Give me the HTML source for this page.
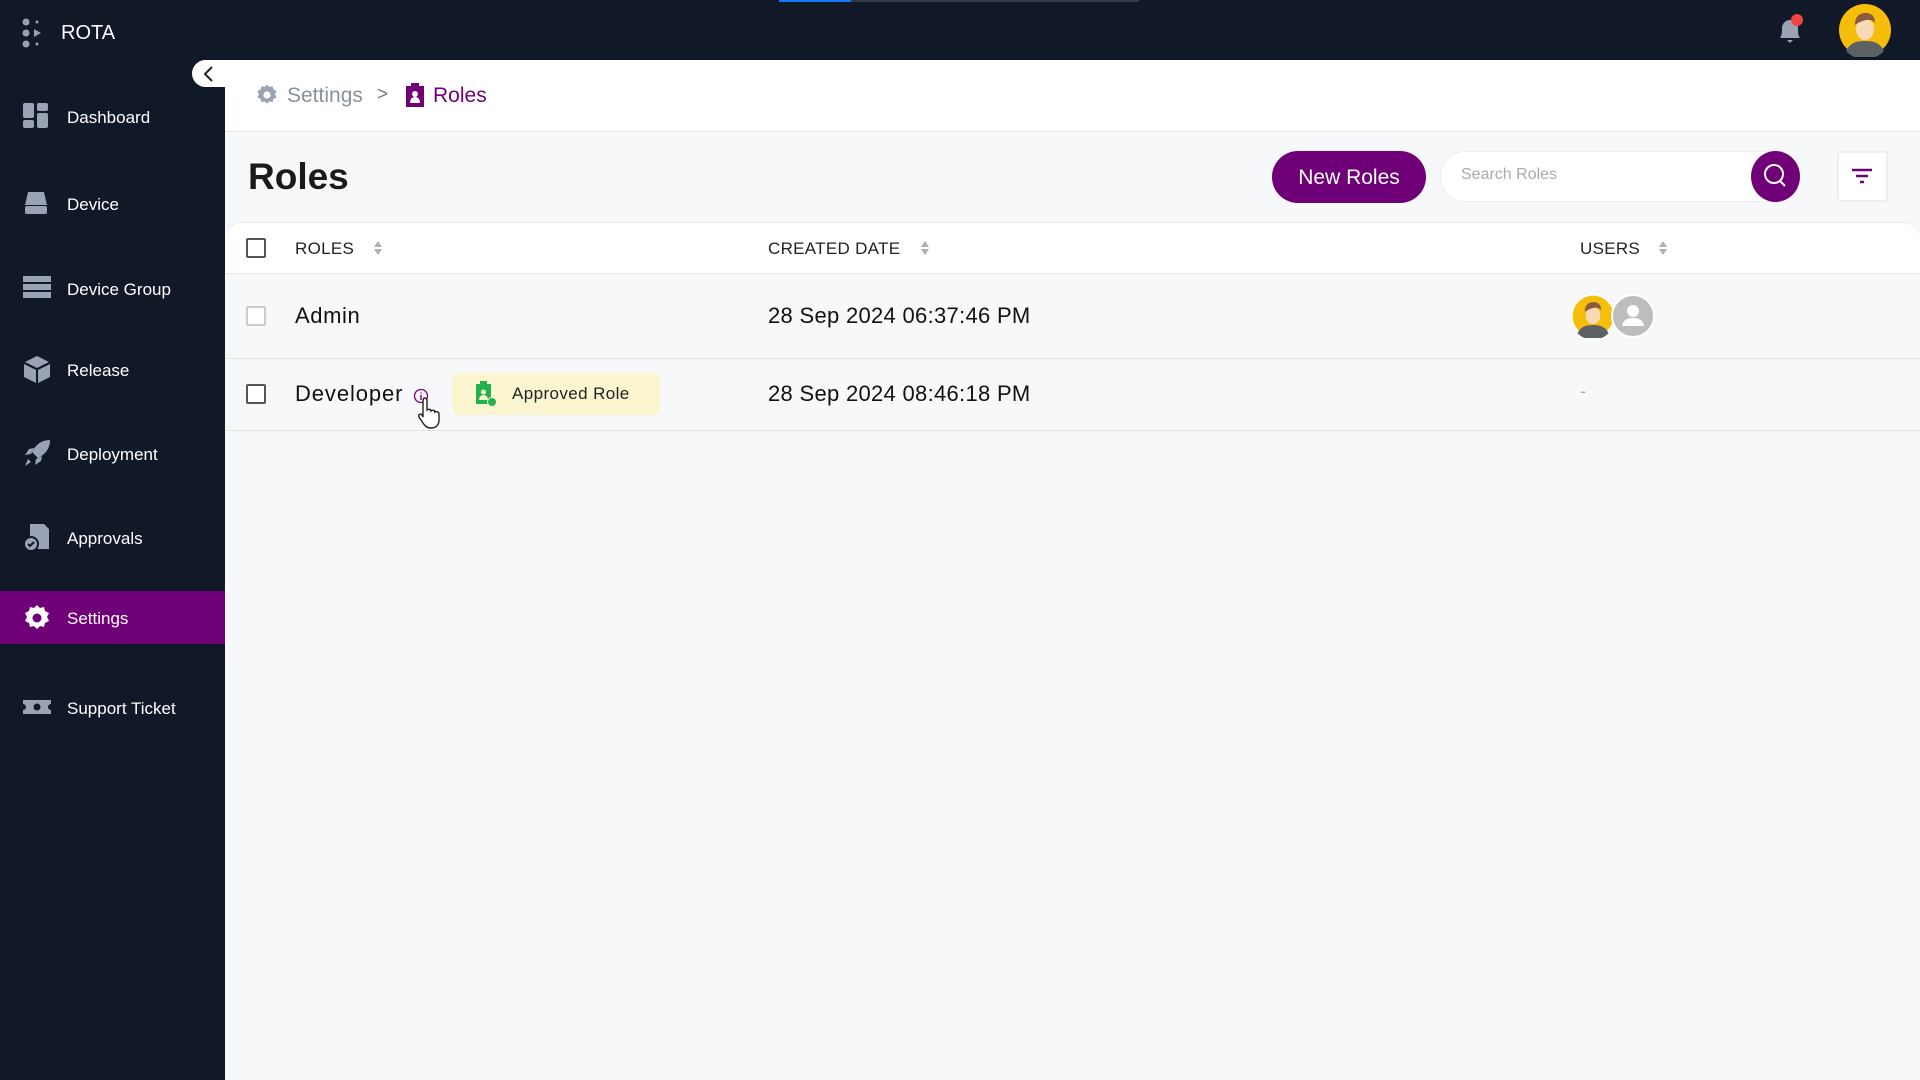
<!DOCTYPE html>
<html><head><meta charset="utf-8"><style>
*{box-sizing:border-box;margin:0;padding:0}
body{width:1920px;height:1080px;overflow:hidden;font-family:"Liberation Sans",sans-serif;background:#f7f8f9;position:relative}
.top{position:absolute;left:0;top:0;width:1920px;height:60px;background:#111827}
.side{position:absolute;left:0;top:60px;width:225px;height:1020px;background:#111827}
.abs{position:absolute}
.nav{position:absolute;left:0;width:225px;height:52px;display:flex;align-items:center;color:#fff;font-size:17px}
.nav svg{position:absolute;left:22px}
.nav span{position:absolute;left:67px;top:18px}
.cb{position:absolute;width:20px;height:20px;border:2px solid #555;border-radius:2px;background:#fff}
.hd{position:absolute;font-size:17px;color:#222;top:239px;letter-spacing:0.3px}
.sort{position:absolute;top:240px;width:10px;height:16px}
.rt{position:absolute;font-size:22px;color:#111}
</style></head><body>
<div class="top"></div>
<div class="abs" style="left:779px;top:0;width:72px;height:2px;background:#1677ff"></div>
<div class="abs" style="left:851px;top:0;width:288px;height:2px;background:#333a45"></div>
<svg class="abs" style="left:20px;top:18px" width="24" height="32" viewBox="0 0 24 32"><g fill="#9aa0ac"><circle cx="6" cy="4" r="3.5"/><circle cx="6" cy="15" r="3.5"/><circle cx="6" cy="26" r="3.5"/><circle cx="17" cy="4" r="1.5"/><circle cx="17" cy="26" r="1.5"/><path d="M14 11l7 4-7 4z"/></g></svg>
<div class="abs" style="left:61px;top:22px;color:#fff;font-size:20px">ROTA</div>
<svg class="abs" style="left:1772px;top:12px" width="36" height="36" viewBox="0 0 36 36"><path d="M8 26c2-3 2-6 2-10a8 8 0 0116 0c0 4 0 7 2 10z" fill="#9aa3b5"/><path d="M15 28h6l-3 3z" fill="#9aa3b5"/><circle cx="25" cy="8" r="6" fill="#f2453d"/></svg>
<svg class="abs" style="left:1838px;top:3px" width="54" height="54" viewBox="0 0 54 54"><circle cx="27" cy="27" r="26" fill="#f5be0b"/><path d="M8 48c4-8 10-10 19-10s15 2 19 10a26 26 0 01-38 0z" fill="#5d6166"/><ellipse cx="27" cy="26" rx="9" ry="11" fill="#f7d9b8"/><path d="M17 22c0-9 5-12 11-12s9 4 9 10c-3-4-10-5-20 2z" fill="#8a5a3c"/></svg>
<div class="side"></div>
<div class="abs" style="left:192px;top:60px;width:40px;height:27px;background:#fff;border-radius:14px 0 0 14px"></div>
<svg class="abs" style="left:202px;top:64px" width="14" height="20" viewBox="0 0 14 20"><path d="M10 3L3 10l7 7" stroke="#222" stroke-width="2" fill="none"/></svg>
<div class="nav" style="top:90px"><svg width="28" height="28" viewBox="0 0 28 28" fill="#9aa3b5"><rect x="1" y="1" width="11" height="15" rx="2"/><rect x="15" y="1" width="11" height="8" rx="2"/><rect x="1" y="18" width="11" height="8" rx="2"/><rect x="15" y="11" width="11" height="15" rx="2"/></svg><span>Dashboard</span></div>
<div class="nav" style="top:177px"><svg width="28" height="28" viewBox="0 0 28 28" fill="#9aa3b5"><path d="M6 3h16l3 13H3z"/><rect x="3" y="17" width="22" height="8" rx="2"/></svg><span>Device</span></div>
<div class="nav" style="top:262px"><svg width="30" height="28" viewBox="0 0 30 28" fill="#9aa3b5"><rect x="1" y="2" width="28" height="6"/><rect x="1" y="10" width="28" height="6"/><rect x="1" y="18" width="28" height="6"/></svg><span>Device Group</span></div>
<div class="nav" style="top:343px"><svg width="30" height="30" viewBox="0 0 30 30" fill="#9aa3b5"><path d="M15 2l12 6-12 6-12-6z"/><path d="M2 10l12 6v13L2 23z"/><path d="M28 10l-12 6v13l12-6z"/></svg><span>Release</span></div>
<div class="nav" style="top:427px"><svg width="30" height="30" viewBox="0 0 30 30" fill="#9aa3b5"><path d="M28 2c-8 0-14 4-18 12l6 6c8-4 12-10 12-18z"/><path d="M9 16l-6 1 4-6 5-1zM14 21l-1 6 6-4 1-5z"/><path d="M6 21l3 3-6 4z"/></svg><span>Deployment</span></div>
<div class="nav" style="top:511px"><svg width="30" height="30" viewBox="0 0 30 30" fill="#9aa3b5"><path d="M8 2h14l5 5v20H8z"/><circle cx="9" cy="22" r="7" fill="#9aa3b5" stroke="#111827" stroke-width="2"/><path d="M6 22l2 2 4-4" stroke="#111827" stroke-width="2" fill="none"/></svg><span>Approvals</span></div>
<div class="nav" style="top:591px;height:53px;background:#6f0077"><svg width="30" height="30" viewBox="0 0 30 30"><path d="M15 2l3 3 4-1 1 4 4 2-2 4 2 4-4 2-1 4-4-1-3 3-3-3-4 1-1-4-4-2 2-4-2-4 4-2 1-4 4 1z" fill="#fff"/><circle cx="15" cy="15" r="4.5" fill="#6f0077"/></svg><span>Settings</span></div>
<div class="nav" style="top:681px"><svg width="30" height="28" viewBox="0 0 30 28" fill="#9aa3b5"><path d="M1 7h28v4a3 3 0 000 6v4H1v-4a3 3 0 000-6z"/><circle cx="15" cy="14" r="3.5" fill="#111827"/></svg><span>Support Ticket</span></div>
<div class="abs" style="left:225px;top:60px;width:1695px;height:72px;background:#fff;border-bottom:1px solid #e6e6e6"></div>
<svg class="abs" style="left:255px;top:83px" width="24" height="24" viewBox="0 0 30 30"><path d="M15 2l3 3 4-1 1 4 4 2-2 4 2 4-4 2-1 4-4-1-3 3-3-3-4 1-1-4-4-2 2-4-2-4 4-2 1-4 4 1z" fill="#9aa3b5"/><circle cx="15" cy="15" r="4.5" fill="#fff"/></svg>
<div class="abs" style="left:287px;top:84px;font-size:21px;color:#8a8f98">Settings</div>
<div class="abs" style="left:377px;top:84px;font-size:19px;color:#777">&gt;</div>
<svg class="abs" style="left:405px;top:82px" width="20" height="26" viewBox="0 0 20 26"><rect x="1" y="4" width="18" height="21" fill="#6f0077"/><rect x="6" y="1" width="8" height="5" fill="#6f0077"/><circle cx="10" cy="12" r="3" fill="#fff"/><path d="M5 21c0-4 2-6 5-6s5 2 5 6z" fill="#fff"/></svg>
<div class="abs" style="left:433px;top:84px;font-size:21px;color:#6f0077">Roles</div>
<div class="abs" style="left:248px;top:156px;font-size:37px;font-weight:bold;color:#1a1a1a">Roles</div>
<div class="abs" style="left:1272px;top:151px;width:154px;height:52px;border-radius:26px;background:#6f0077;color:#fff;font-size:21px;text-align:center;line-height:54px">New Roles</div>
<div class="abs" style="left:1440px;top:151px;width:360px;height:51px;border-radius:26px;background:#fff;border:1px solid #eee"></div>
<div class="abs" style="left:1461px;top:166px;font-size:16px;color:#aaa">Search Roles</div>
<div class="abs" style="left:1751px;top:151px;width:49px;height:51px;border-radius:50%;background:#6f0077"></div>
<svg class="abs" style="left:1762px;top:162px" width="28" height="28" viewBox="0 0 28 28"><circle cx="12" cy="12" r="9" stroke="#fff" stroke-width="2" fill="none"/><path d="M18 19l5 5" stroke="#fff" stroke-width="2"/></svg>
<div class="abs" style="left:1837px;top:151px;width:51px;height:51px;background:#fff;border:2px solid #eee;border-radius:3px"></div>
<svg class="abs" style="left:1850px;top:168px" width="24" height="18" viewBox="0 0 24 18"><path d="M2 2h20M6 8h12M10 14h4" stroke="#6f0077" stroke-width="2.5"/></svg>
<div class="abs" style="left:226px;top:222px;width:1694px;height:52px;background:#fff;border-radius:16px 16px 0 0;border-top:1px solid #eaeaea;border-bottom:1px solid #e6e6e6"></div>
<div class="cb" style="left:246px;top:238px"></div>
<div class="hd" style="left:295px">ROLES</div>
<div class="hd" style="left:768px">CREATED DATE</div>
<div class="hd" style="left:1580px">USERS</div>
<svg class="sort" style="left:373px" viewBox="0 0 10 16"><path d="M5 1l4 6H1zM5 15l4-6H1z" fill="#b0b0b0"/></svg>
<svg class="sort" style="left:920px" viewBox="0 0 10 16"><path d="M5 1l4 6H1zM5 15l4-6H1z" fill="#b0b0b0"/></svg>
<svg class="sort" style="left:1658px" viewBox="0 0 10 16"><path d="M5 1l4 6H1zM5 15l4-6H1z" fill="#b0b0b0"/></svg>
<div class="abs" style="left:226px;top:358px;width:1694px;height:1px;background:#e3e3e3"></div>
<div class="abs" style="left:226px;top:430px;width:1694px;height:1px;background:#e3e3e3"></div>
<div class="cb" style="left:246px;top:306px;border-color:#ccc"></div>
<div class="rt" style="left:295px;top:303px;letter-spacing:0.6px">Admin</div>
<div class="rt" style="left:768px;top:303px;letter-spacing:0.3px">28 Sep 2024 06:37:46 PM</div>
<svg class="abs" style="left:1571px;top:294px" width="44" height="44" viewBox="0 0 54 54"><circle cx="27" cy="27" r="26" fill="#f5be0b" stroke="#fff" stroke-width="2"/><path d="M8 48c4-8 10-10 19-10s15 2 19 10a26 26 0 01-38 0z" fill="#5d6166"/><ellipse cx="27" cy="26" rx="9" ry="11" fill="#f7d9b8"/><path d="M17 22c0-9 5-12 11-12s9 4 9 10c-3-4-10-5-20 2z" fill="#8a5a3c"/></svg>
<svg class="abs" style="left:1611px;top:294px" width="44" height="44" viewBox="0 0 44 44"><circle cx="22" cy="22" r="21" fill="#bdbdbd" stroke="#fff" stroke-width="2"/><circle cx="22" cy="17" r="6" fill="#fff"/><path d="M11 32c1-6 5-8 11-8s10 2 11 8z" fill="#fff"/></svg>
<div class="cb" style="left:246px;top:384px"></div>
<div class="rt" style="left:295px;top:381px;letter-spacing:0.9px">Developer</div>
<svg class="abs" style="left:413px;top:388px" width="16" height="16" viewBox="0 0 16 16"><circle cx="8" cy="8" r="6.5" stroke="#6f0077" stroke-width="1.3" fill="none"/><path d="M8 7v5M8 4.5v1" stroke="#6f0077" stroke-width="1.4"/></svg>
<svg class="abs" style="left:418px;top:396px" width="24" height="34" viewBox="0 0 24 34"><path d="M6 2c2 0 3 1 3 3v9c1-1 4-1 4 1 1-1 4-1 4 1 1-1 4 0 4 2v6c0 5-3 8-8 8-4 0-6-2-8-5l-4-6c-1-2 1-4 3-2l1 2V5c0-2 1-3 1-3z" fill="#fff" stroke="#222" stroke-width="1.4"/></svg>
<div class="abs" style="left:452px;top:373px;width:208px;height:42px;background:#fbf6cf;border-radius:5px"></div>
<svg class="abs" style="left:474px;top:381px" width="24" height="26" viewBox="0 0 24 26"><rect x="2" y="3" width="15" height="20" fill="#22b14c"/><rect x="6" y="0" width="7" height="4" fill="#22b14c"/><circle cx="9.5" cy="11" r="2.5" fill="#fbf6cf"/><path d="M5 19c0-3 2-5 4.5-5s4.5 2 4.5 5z" fill="#fbf6cf"/><circle cx="18" cy="21" r="4.5" fill="#22b14c" stroke="#fbf6cf"/></svg>
<div class="abs" style="left:512px;top:384px;font-size:17px;color:#222;letter-spacing:0.4px">Approved Role</div>
<div class="rt" style="left:768px;top:381px;letter-spacing:0.3px">28 Sep 2024 08:46:18 PM</div>
<div class="abs" style="left:1580px;top:381px;font-size:18px;color:#aaa">-</div>
</body></html>
